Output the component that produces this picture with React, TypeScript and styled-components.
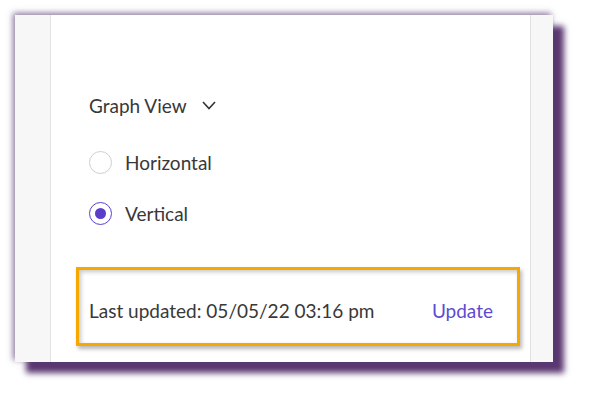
import React, { useState } from 'react';
import styled, { createGlobalStyle } from 'styled-components';

const GlobalStyle = createGlobalStyle`
    html, body {
        margin: 0;
        padding: 0;
        background: #ffffff;
    }
    body {
        font-family: Lato, "Open Sans", "Liberation Sans", sans-serif;
        color: #383838;
    }
`;

const Page = styled.div`
    width: 596px;
    height: 405px;
    padding: 15px 0 0 15px;
    box-sizing: border-box;
`;

const Frame = styled.div`
    width: 538px;
    height: 347px;
    display: flex;
    background: #ffffff;
    box-shadow: -2px -2px 6px rgba(92, 64, 112, 0.7), 11px 11px 6px #5a3872;
`;

const Gutter = styled.div<{ $side: 'left' | 'right' }>`
    width: ${p => (p.$side === 'left' ? '36px' : '23px')};
    background: #f7f7f7;
    ${p => (p.$side === 'left' ? 'border-right' : 'border-left')}: 1px solid #e2e2e2;
    box-sizing: border-box;
`;

const Content = styled.div`
    flex: 1;
    padding-top: 78px;
    display: flex;
    flex-direction: column;
`;

const DropdownToggle = styled.button`
    display: flex;
    align-items: center;
    gap: 15px;
    align-self: flex-start;
    margin-left: 38px;
    padding: 0;
    height: 24px;
    border: none;
    background: none;
    font: inherit;
    font-size: 19px;
    color: #383838;
    cursor: pointer;
`;

const RadioGroup = styled.div`
    display: flex;
    flex-direction: column;
    gap: 27px;
    margin: 33px 0 0 38px;
`;

const RadioRow = styled.label`
    display: flex;
    align-items: center;
    gap: 13px;
    height: 24px;
    font-size: 19px;
    color: #383838;
    cursor: pointer;
`;

const RadioCircle = styled.span<{ $checked: boolean }>`
    width: 23px;
    height: 23px;
    border-radius: 50%;
    box-sizing: border-box;
    border: 1.5px solid ${p => (p.$checked ? '#5b40cf' : '#cfcfcf')};
    display: flex;
    align-items: center;
    justify-content: center;
    background: #ffffff;

    &::after {
        content: '';
        width: 11px;
        height: 11px;
        border-radius: 50%;
        background: #5a3dc9;
        display: ${p => (p.$checked ? 'block' : 'none')};
    }
`;

const UpdateBox = styled.div`
    margin: 42px 10px 0 25px;
    border: 3px solid #f6a800;
    padding: 29px 24px 20px 10px;
    display: flex;
    justify-content: space-between;
    align-items: center;
    box-shadow: 2px 3px 4px rgba(0, 0, 0, 0.28), inset 2px 2px 4px rgba(0, 0, 0, 0.22);
`;

const UpdatedText = styled.span`
    font-size: 19px;
    line-height: 24px;
    color: #383838;
`;

const UpdateLink = styled.button`
    border: none;
    background: none;
    padding: 0;
    font: inherit;
    font-size: 19px;
    line-height: 24px;
    color: #5c4bd2;
    cursor: pointer;
`;

const options = ['Horizontal', 'Vertical'];

const App: React.FC = () => {
    const [view, setView] = useState('Vertical');
    return (
        <>
            <GlobalStyle />
            <Page>
                <Frame>
                    <Gutter $side="left" />
                    <Content>
                        <DropdownToggle>
                            Graph View
                            <svg width="14" height="9" viewBox="0 0 14 9" fill="none">
                                <polyline points="1,1 7,7.5 13,1" stroke="#333" strokeWidth="1.6" />
                            </svg>
                        </DropdownToggle>
                        <RadioGroup>
                            {options.map(opt => (
                                <RadioRow key={opt} onClick={() => setView(opt)}>
                                    <RadioCircle $checked={view === opt} />
                                    {opt}
                                </RadioRow>
                            ))}
                        </RadioGroup>
                        <UpdateBox>
                            <UpdatedText>Last updated: 05/05/22 03:16 pm</UpdatedText>
                            <UpdateLink>Update</UpdateLink>
                        </UpdateBox>
                    </Content>
                    <Gutter $side="right" />
                </Frame>
            </Page>
        </>
    );
};

export default App;
